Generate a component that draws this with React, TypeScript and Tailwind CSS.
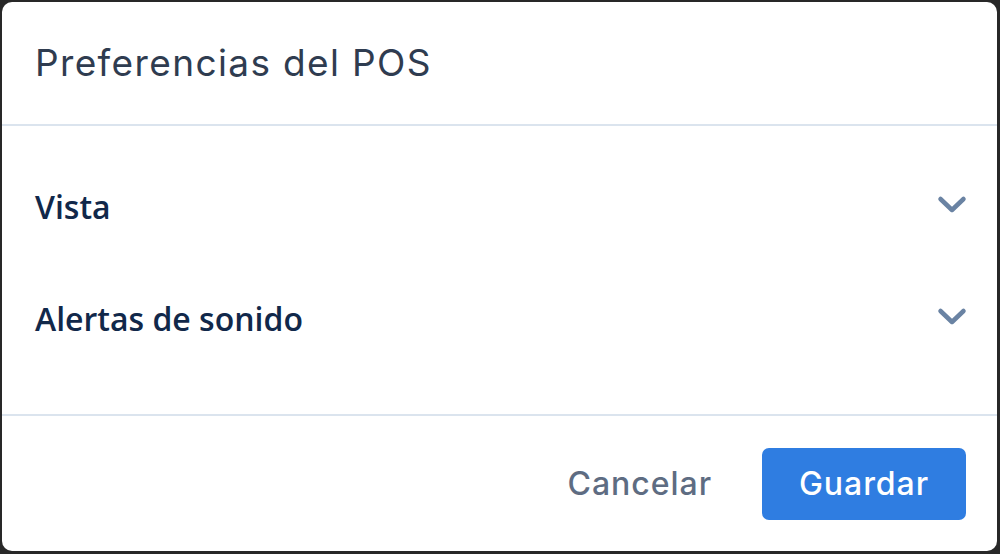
import React from 'react';

const Chevron = () => (
  <svg width="32" height="20" viewBox="0 0 32 20" fill="none" className="-mt-[4px]">
    <path
      d="M4.5 4 L16 15 L27.5 4"
      stroke="#6a83a3"
      strokeWidth="4.5"
      strokeLinecap="round"
      strokeLinejoin="round"
    />
  </svg>
);

const sections = ['Vista', 'Alertas de sonido'];

export default function App() {
  return (
    <div className="w-[1000px] h-[554px] bg-[#282828] pt-[2px] pl-[2px] pr-[3px] pb-[3px]">
      <div className="h-full bg-white rounded-[10px] flex flex-col overflow-hidden">
        <div className="h-[124px] shrink-0 flex items-center px-[33px] border-b-2 border-[#dbe4ee]">
          <h1 className="font-['Inter',sans-serif] text-[37px] tracking-[0.037em] text-[#2f3c50] font-normal">
            Preferencias del POS
          </h1>
        </div>
        <div className="flex-1 flex flex-col gap-[56px] pt-[53px] pl-[33px] pr-[29px]">
          {sections.map((s) => (
            <div key={s} className="h-[56px] flex items-center justify-between cursor-pointer">
              <span className="font-['Open_Sans',sans-serif] text-[32px] font-semibold text-[#11284a]">
                {s}
              </span>
              <Chevron />
            </div>
          ))}
        </div>
        <div className="h-[137px] shrink-0 border-t-2 border-[#dbe4ee] flex items-center justify-end gap-[50px] pr-[31px]">
          <button className="font-['Inter',sans-serif] text-[32px] font-medium tracking-[0.03em] text-[#5e6c82]">
            Cancelar
          </button>
          <button className="w-[204px] h-[72px] rounded-[7px] bg-[#2f7de1] text-white font-['Inter',sans-serif] text-[32px] font-medium tracking-[0.03em]">
            Guardar
          </button>
        </div>
      </div>
    </div>
  );
}
